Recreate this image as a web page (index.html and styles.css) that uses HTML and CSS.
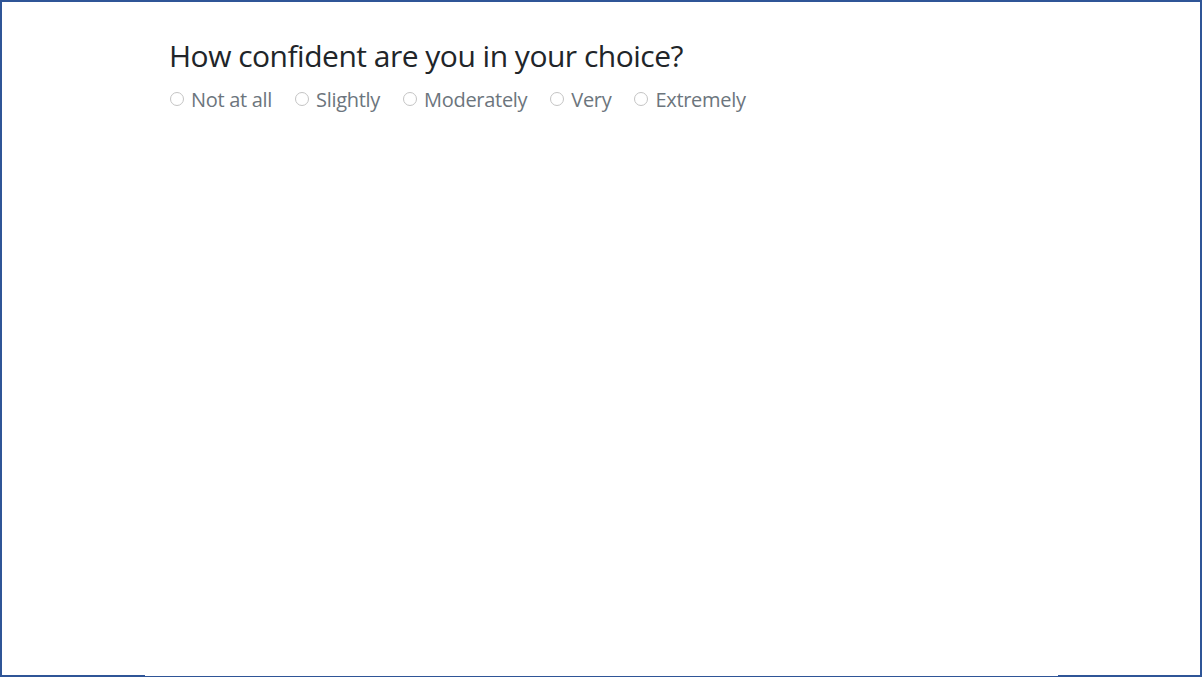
FILE: index.html
```html
<!DOCTYPE html>
<html lang="en">
<head>
<meta charset="utf-8">
<link rel="stylesheet" href="styles.css">
</head>
<body>
<div class="frame">
  <div class="content">
    <h2 class="question">How confident are you in your choice?</h2>
    <div class="options">
      <label class="option"><span class="radio"></span><span class="label-text">Not at all</span></label>
      <label class="option"><span class="radio"></span><span class="label-text">Slightly</span></label>
      <label class="option"><span class="radio"></span><span class="label-text">Moderately</span></label>
      <label class="option"><span class="radio"></span><span class="label-text">Very</span></label>
      <label class="option"><span class="radio"></span><span class="label-text">Extremely</span></label>
    </div>
  </div>
  <div class="bottom-line"></div>
</div>
</body>
</html>
```
FILE: styles.css
```css
html, body {
  margin: 0;
  padding: 0;
  background: #ffffff;
}
.frame {
  position: relative;
  box-sizing: border-box;
  width: 1202px;
  height: 677px;
  border-top: 2px solid #2f5597;
  border-left: 2px solid #2f5597;
  border-right: 2px solid #2f5597;
  border-bottom: 1px solid #2f5597;
  background: #fff;
  font-family: "Open Sans", "Noto Sans", sans-serif;
}
.bottom-line {
  position: absolute;
  left: -2px;
  right: -2px;
  bottom: -1px;
  height: 2px;
  background: linear-gradient(to right, #2f5597 0, #2f5597 145px, transparent 145px, transparent 1058px, #2f5597 1058px);
}
.content {
  padding: 36px 0 0 167px;
}
.question {
  margin: 0;
  font-weight: 400;
  font-size: 30px;
  line-height: 36px;
  color: #212529;
  letter-spacing: -0.5px;
}
.options {
  display: flex;
  gap: 22px;
  margin-top: 12px;
}
.option {
  display: flex;
  align-items: center;
  gap: 7px;
  font-size: 20px;
  color: #6c757d;
  line-height: 28px;
}
.radio {
  width: 14px;
  height: 14px;
  box-sizing: border-box;
  border: 1px solid #c4c4c4;
  border-radius: 50%;
  background: #fff;
  margin-top: -3px;
  margin-left: 1px;
}
.label-text {
  letter-spacing: -0.3px;
}
```
